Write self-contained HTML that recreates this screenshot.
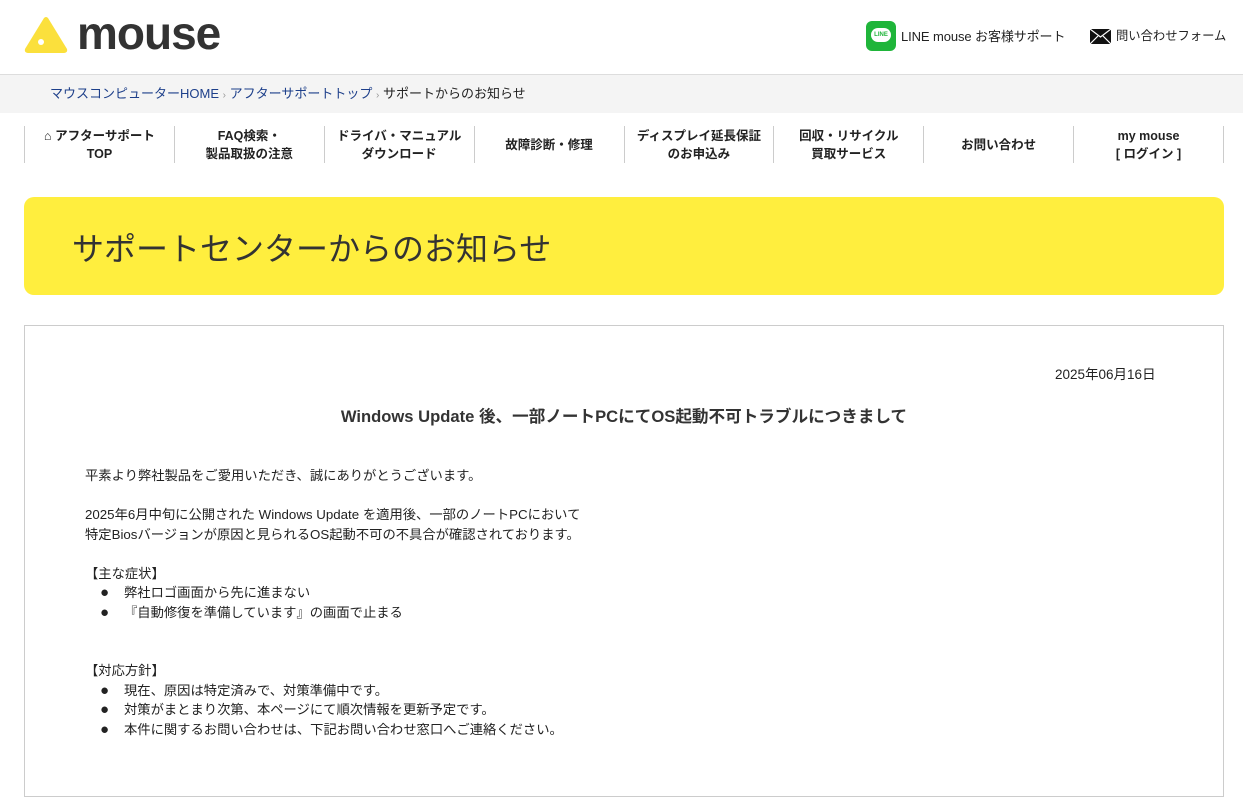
<!DOCTYPE html>
<html><head><meta charset="utf-8"><style>
body{margin:0;background:#fff;font-family:"Liberation Sans","Noto Sans CJK JP",sans-serif;color:#222;width:1243px;height:776px;overflow:hidden;position:relative}
.a{position:absolute}
.bc{top:74px;left:0;width:1243px;height:38px;background:#f4f4f4;border-top:1px solid #ddd;font-size:13px;line-height:38px}
.bc span.l{color:#1d3f8a}
.nav{top:126px;left:24px;width:1200px;height:37px;display:flex}
.nav div{flex:1;border-left:1px solid #ccc;text-align:center;font-size:12.5px;font-weight:bold;line-height:18px;display:flex;align-items:center;justify-content:center}
.nav div:last-child{border-right:1px solid #ccc}
.ban{top:197px;left:24px;width:1200px;height:98px;background:#ffee3e;border-radius:10px}
.ban h1{margin:0;position:absolute;left:48px;top:27px;font-size:32px;font-weight:normal;color:#333}
.box{top:325px;left:24px;width:1198px;height:470px;border:1px solid #ccc}
.t{font-size:13.3px;line-height:19.5px;color:#222}
.b{display:inline-block;width:39px;text-align:center;font-size:15px;line-height:19px;vertical-align:top}
</style></head><body>
<svg class="a" style="left:24px;top:16px" width="44" height="38" viewBox="0 0 44 38"><path d="M20 2 Q22 0 24 2 L43 33 Q44 37 39 37 L5 37 Q0 37 1 33Z" fill="#fbe03c"/><circle cx="17" cy="26" r="3" fill="#fff"/></svg>
<div class="a" style="left:77px;top:8px;font-size:46px;line-height:50px;font-weight:bold;color:#333;letter-spacing:-1px">mouse</div>
<div class="a" style="left:866px;top:21px;width:30px;height:30px;background:#1fb53a;border-radius:6px"><div style="position:absolute;left:5px;top:7px;width:20px;height:14px;background:#fff;border-radius:8px;font-size:6px;color:#1fb53a;text-align:center;line-height:14px;font-weight:bold">LINE</div></div>
<div class="a" style="left:901px;top:26px;font-size:13px;letter-spacing:-0.1px">LINE mouse お客様サポート</div>
<svg class="a" style="left:1090px;top:29px" width="21" height="15" viewBox="0 0 21 15"><rect width="21" height="15" fill="#111"/><path d="M0 0 L10.5 8 L21 0 M0 15 L8 7 M21 15 L13 7" stroke="#fff" stroke-width="1.2" fill="none"/></svg>
<div class="a" style="left:1116px;top:26px;font-size:12.3px">問い合わせフォーム</div>
<div class="a bc"><div style="margin-left:50px"><span class="l">マウスコンピューターHOME</span> <span style="color:#999;font-size:10px">›</span> <span class="l">アフターサポートトップ</span> <span style="color:#999;font-size:10px">›</span> サポートからのお知らせ</div></div>
<div class="a nav"><div>⌂ アフターサポート<br>TOP</div><div>FAQ検索・<br>製品取扱の注意</div><div>ドライバ・マニュアル<br>ダウンロード</div><div>故障診断・修理</div><div>ディスプレイ延長保証<br>のお申込み</div><div>回収・リサイクル<br>買取サービス</div><div>お問い合わせ</div><div>my mouse<br>[ ログイン ]</div></div>
<div class="a ban"><h1>サポートセンターからのお知らせ</h1></div>
<div class="a box"></div>
<div class="a t" style="left:1055px;top:365px;font-size:13.5px">2025年06月16日</div>
<div class="a" style="left:24px;width:1200px;top:403px;text-align:center;font-size:16.6px;font-weight:bold;color:#333">Windows Update 後、一部ノートPCにてOS起動不可トラブルにつきまして</div>
<div class="a t" style="left:85px;top:466px">平素より弊社製品をご愛用いただき、誠にありがとうございます。<br><br>2025年6月中旬に公開された Windows Update を適用後、一部のノートPCにおいて<br>特定Biosバージョンが原因と見られるOS起動不可の不具合が確認されております。<br><br>【主な症状】<br><span class="b">●</span>弊社ロゴ画面から先に進まない<br><span class="b">●</span>『自動修復を準備しています』の画面で止まる<br><br><br>【対応方針】<br><span class="b">●</span>現在、原因は特定済みで、対策準備中です。<br><span class="b">●</span>対策がまとまり次第、本ページにて順次情報を更新予定です。<br><span class="b">●</span>本件に関するお問い合わせは、下記お問い合わせ窓口へご連絡ください。</div>
</body></html>
